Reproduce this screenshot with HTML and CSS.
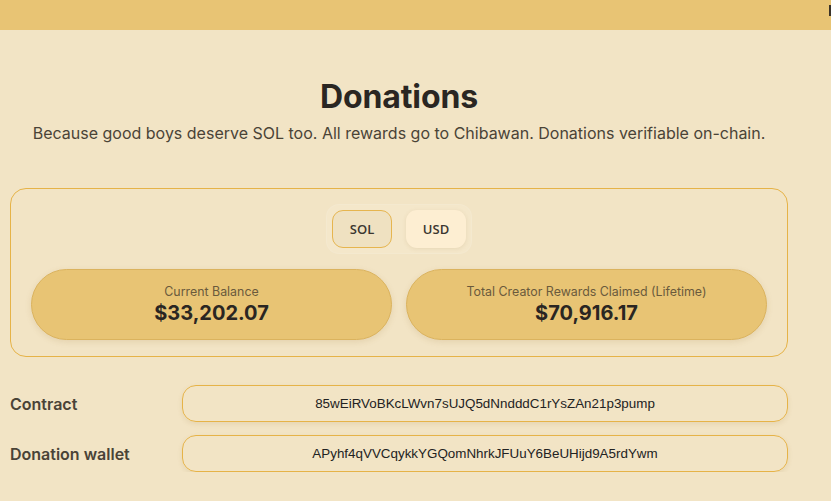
FILE: index.html
```html
<!DOCTYPE html>
<html lang="en">
<head>
<meta charset="utf-8">
<title>Donations</title>
<link rel="stylesheet" href="styles.css">
</head>
<body>
<header class="topbar"><span class="topbar-edge"></span></header>
<main class="page">
  <section class="donations">
    <h1 class="title">Donations</h1>
    <p class="subtitle">Because good boys deserve SOL too. All rewards go to Chibawan. Donations verifiable on-chain.</p>
    <div class="card">
      <div class="toggle">
        <button class="toggle-btn toggle-btn--active">SOL</button>
        <button class="toggle-btn">USD</button>
      </div>
      <div class="stats">
        <div class="stat">
          <div class="stat-label">Current Balance</div>
          <div class="stat-value">$33,202.07</div>
        </div>
        <div class="stat">
          <div class="stat-label">Total Creator Rewards Claimed (Lifetime)</div>
          <div class="stat-value">$70,916.17</div>
        </div>
      </div>
    </div>
    <div class="rows">
      <div class="row">
        <div class="row-label">Contract</div>
        <div class="row-field">85wEiRVoBKcLWvn7sUJQ5dNndddC1rYsZAn21p3pump</div>
      </div>
      <div class="row">
        <div class="row-label">Donation wallet</div>
        <div class="row-field">APyhf4qVVCqykkYGQomNhrkJFUuY6BeUHijd9A5rdYwm</div>
      </div>
    </div>
  </section>
</main>
</body>
</html>
```

FILE: styles.css
```css
* { box-sizing: border-box; }
html, body { margin: 0; padding: 0; }
body {
  background: #f2e4c5;
  font-family: Inter, "Noto Sans", sans-serif;
  color: #2b2824;
  overflow: hidden;
}
.topbar {
  height: 30px;
  background: #e8c474;
  display: flex;
  justify-content: flex-end;
  align-items: flex-start;
}
.topbar-edge {
  width: 2px;
  height: 11px;
  margin-top: 5px;
  background: #3a3328;
}
.page {
  padding: 0 43px 0 10px;
}
.donations {
  width: 778px;
}
.title {
  margin: 47px 0 0;
  text-align: center;
  font-size: 32px;
  line-height: 39px;
  font-weight: 700;
  color: #2a2622;
  letter-spacing: -0.1px;
}
.subtitle {
  margin: 6px 0 0;
  text-align: center;
  font-size: 16px;
  line-height: 22px;
  color: #4a4337;
}
.card {
  margin-top: 44px;
  border: 1px solid #e6b348;
  border-radius: 16px;
  padding: 16px 20px 16px;
  display: flex;
  flex-direction: column;
  align-items: center;
}
.toggle {
  display: flex;
  gap: 14px;
  padding: 5px;
  border-radius: 12px;
  background: #f4e7ca;
  box-shadow: 0 0 0 1px rgba(255,255,255,0.18);
}
.toggle-btn {
  width: 60px;
  height: 38px;
  border-radius: 11px;
  border: 1px solid transparent;
  background: #fdeed2;
  font-family: "Open Sans", Inter, sans-serif;
  font-size: 13px;
  font-weight: 600;
  color: #3b3630;
  box-shadow: 0 1px 4px rgba(150,110,40,0.12);
  cursor: pointer;
}
.toggle-btn--active {
  background: #efe1c1;
  border-color: #e6b54f;
  box-shadow: none;
}
.stats {
  margin-top: 16px;
  align-self: stretch;
  display: grid;
  grid-template-columns: 1fr 1fr;
  gap: 14px;
}
.stat {
  height: 71px;
  border-radius: 36px;
  background: #e8c474;
  border: 1px solid #dbb35e;
  box-shadow: 0 2px 6px rgba(150,110,40,0.15);
  display: flex;
  flex-direction: column;
  align-items: center;
  justify-content: center;
}
.stat-label {
  font-size: 12.4px;
  line-height: 15px;
  color: #6a5a3c;
}
.stat-value {
  margin-top: 2px;
  font-size: 20px;
  line-height: 24px;
  font-weight: 700;
  color: #2a2622;
}
.rows {
  margin-top: 28px;
  display: flex;
  flex-direction: column;
  gap: 13px;
}
.row {
  display: grid;
  grid-template-columns: 172px 1fr;
  align-items: center;
}
.row-label {
  font-size: 16px;
  font-weight: 600;
  color: #4a4337;
}
.row-field {
  height: 37px;
  border: 1px solid #e6b348;
  border-radius: 14px;
  display: flex;
  align-items: center;
  justify-content: center;
  font-family: "Liberation Sans", Arial, sans-serif;
  font-size: 13.4px;
  color: #222;
  box-shadow: 0 2px 5px rgba(150,110,40,0.12);
}
```
